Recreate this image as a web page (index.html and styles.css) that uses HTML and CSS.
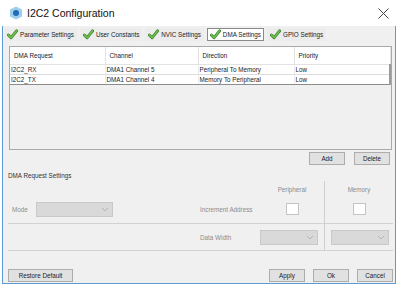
FILE: index.html
```html
<!DOCTYPE html>
<html lang="en">

	<head>
		<meta charset="UTF-8">
		<title>I2C2 Configuration</title>
		<link rel="stylesheet" href="styles.css">
	</head>

	<body>
		<svg width="0" height="0" class="defs">
			<symbol id="check" viewBox="0 0 12 12">
				<path d="M1.5 6.5 L4.5 9.5 L10.5 2" fill="none" stroke="#3d7a2e" stroke-width="3.2" stroke-linecap="round" stroke-linejoin="round"/>
				<path d="M1.5 6.5 L4.5 9.5 L10.5 2" fill="none" stroke="#6cc24a" stroke-width="1.8" stroke-linecap="round" stroke-linejoin="round"/>
			</symbol>
			<symbol id="chevron" viewBox="0 0 8 5">
				<path d="M1 1 L4 4 L7 1" fill="none" stroke="#b4b4b4" stroke-width="1"/>
			</symbol>
		</svg>

		<div class="titlebar">
			<svg class="app-icon" width="14" height="14" viewBox="0 0 14 14">
				<polygon points="7,0.5 13,3.5 13,10.5 7,13.5 1,10.5 1,3.5" fill="#9fcdec"/>
				<circle cx="7" cy="7" r="3" fill="#1f6bb5"/>
			</svg>
			<span class="title">I2C2 Configuration</span>
			<svg class="close" width="11" height="11" viewBox="0 0 11 11">
				<path d="M0.5 0.5 L10.5 10.5 M10.5 0.5 L0.5 10.5" stroke="#444" stroke-width="1"/>
			</svg>
		</div>

		<div class="window">
			<ul class="tabs">
				<li><svg class="check"><use href="#check"/></svg>Parameter Settings</li>
				<li><svg class="check"><use href="#check"/></svg>User Constants</li>
				<li><svg class="check"><use href="#check"/></svg>NVIC Settings</li>
				<li class="active"><svg class="check"><use href="#check"/></svg>DMA Settings</li>
				<li><svg class="check"><use href="#check"/></svg>GPIO Settings</li>
			</ul>

			<div class="grid-box">
				<table class="grid">
					<colgroup>
						<col class="c1"><col class="c2"><col class="c3"><col>
					</colgroup>
					<thead>
						<tr>
							<th>DMA Request</th>
							<th>Channel</th>
							<th>Direction</th>
							<th>Priority</th>
						</tr>
					</thead>
					<tbody>
						<tr>
							<td>I2C2_RX</td>
							<td>DMA1 Channel 5</td>
							<td>Peripheral To Memory</td>
							<td>Low</td>
						</tr>
						<tr class="current">
							<td>I2C2_TX</td>
							<td>DMA1 Channel 4</td>
							<td>Memory To Peripheral</td>
							<td>Low</td>
						</tr>
					</tbody>
				</table>
			</div>

			<div class="grid-buttons">
				<button class="btn">Add</button>
				<button class="btn">Delete</button>
			</div>

			<div class="group-title">DMA Request Settings</div>

			<div class="settings">
				<div class="cell"></div>
				<div class="cell"></div>
				<div class="cell head">Peripheral</div>
				<div class="cell head mem">Memory</div>

				<div class="cell line mode">
					<span class="label">Mode</span>
					<span class="select mode-select"><svg class="chev"><use href="#chevron"/></svg></span>
				</div>
				<div class="cell line label">Increment Address</div>
				<div class="cell line center"><span class="checkbox"></span></div>
				<div class="cell line center mem"><span class="checkbox"></span></div>

				<div class="cell line"></div>
				<div class="cell line label">Data Width</div>
				<div class="cell line"><span class="select"><svg class="chev"><use href="#chevron"/></svg></span></div>
				<div class="cell line mem pad"><span class="select"><svg class="chev"><use href="#chevron"/></svg></span></div>
			</div>

			<div class="footer">
				<button class="btn wide">Restore Default</button>
				<div class="footer-right">
					<button class="btn">Apply</button>
					<button class="btn">Ok</button>
					<button class="btn">Cancel</button>
				</div>
			</div>
		</div>
	</body>

</html>
```

FILE: styles.css
```css
html,
body,
ul {
	padding: 0;
	margin: 0;
}

body {
	width: 400px;
	height: 285px;
	background: #fff;
	font-family: "Liberation Sans", Arial, sans-serif;
	font-size: 6.3px;
	color: #222;
	overflow: hidden;
}

.defs {
	position: absolute;
}

.titlebar {
	height: 26px;
	display: flex;
	align-items: center;
	padding-left: 9px;
}

.app-icon {
	margin-right: 4px;
}

.title {
	font-size: 10.5px;
	color: #111;
	flex: 1;
}

.close {
	margin-right: 11px;
}

.window {
	margin: 0 4px 0 2px;
	height: 258px;
	box-sizing: border-box;
	border: 1px solid #5b9bd5;
	border-top: none;
	background: #f0f0f0;
	padding: 0 2px 0 5px;
	display: flex;
	flex-direction: column;
}

.tabs {
	display: flex;
	height: 13px;
	margin: 2px 0 0 -4px;
	gap: 3px;
}

.tabs li {
	list-style: none;
	display: flex;
	align-items: center;
	padding: 0 2px;
	border: 1px solid transparent;
	background: #ececec;
	color: #222;
}

.tabs li.active {
	background: #fff;
	border-color: #8a8a8a;
}

.check {
	width: 11px;
	height: 11px;
	margin-right: 2px;
}

.grid-box {
	margin: 5px 1px 0 1px;
	height: 104px;
	box-sizing: border-box;
	border: 1px solid #a9a9a9;
	background: #f0f0f0;
}

.grid {
	width: 100%;
	border-collapse: collapse;
	table-layout: fixed;
}

.grid col.c1 {
	width: 95px;
}

.grid col.c2 {
	width: 93px;
}

.grid col.c3 {
	width: 96px;
}

.grid th {
	height: 17px;
	font-weight: normal;
	text-align: left;
	padding: 0 0 0 4px;
	background: #fff;
	border-right: 1px solid #e3e3e3;
	border-bottom: 1px solid #e3e3e3;
}

.grid td {
	height: 9px;
	padding: 0 0 0 1px;
	background: #fff;
	white-space: nowrap;
	border-right: 1px solid #ececec;
	border-bottom: 1px solid #dcdcdc;
}

.grid td:last-child {
	border-right: 2px solid #9a9a9a;
}

.grid tr.current td {
	border-top: 1px solid #8c8c8c;
	border-bottom: 1px solid #8c8c8c;
}

.grid-buttons {
	display: flex;
	justify-content: flex-end;
	gap: 9px;
	margin: 2px 3px 0 0;
}

.btn {
	font-family: inherit;
	font-size: 6.3px;
	color: #222;
	background: #e1e1e1;
	border: 1px solid #adadad;
	height: 13px;
	width: 36px;
	padding: 0;
}

.btn.wide {
	width: 65px;
}

.group-title {
	margin-top: 7px;
	line-height: 8px;
	color: #333;
}

.settings {
	margin-top: 1px;
	display: grid;
	grid-template-columns: 192px 60px 64px 1fr;
	grid-template-rows: 14px 29px 27px;
}

.cell {
	display: flex;
	align-items: center;
	color: #8c8c8c;
}

.cell.head {
	justify-content: center;
	padding-top: 2px;
	box-sizing: border-box;
}

.cell.mem {
	border-left: 1px solid #cfcfcf;
}

.cell.line {
	border-bottom: 1px solid #d2d2d2;
}

.cell.center {
	justify-content: center;
}

.cell.pad {
	padding-left: 6px;
}

.mode .label {
	margin: 0 8px 0 4px;
}

.select {
	display: flex;
	align-items: center;
	justify-content: flex-end;
	box-sizing: border-box;
	width: 58px;
	height: 15px;
	background: #d9d9d9;
	border: 1px solid #c9c9c9;
	padding-right: 3px;
}

.mode-select {
	width: 77px;
}

.chev {
	width: 8px;
	height: 5px;
}

.checkbox {
	width: 13px;
	height: 12px;
	box-sizing: border-box;
	background: #fff;
	border: 1px solid #c4c4c4;
}

.footer {
	margin-top: auto;
	margin-bottom: 1px;
	display: flex;
	justify-content: space-between;
	align-items: center;
}

.footer .btn {
	height: 13px;
}

.footer-right {
	display: flex;
	gap: 8px;
}
```
